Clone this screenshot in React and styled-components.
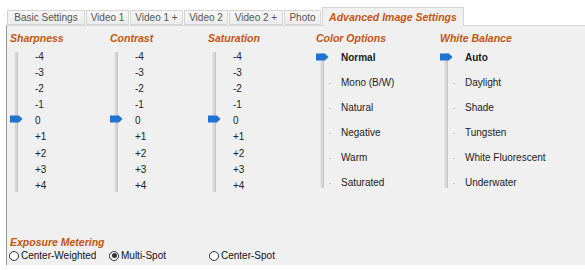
import React from 'react';
import styled, { createGlobalStyle } from 'styled-components';

const GlobalStyle = createGlobalStyle`
	html, body {
		margin: 0;
		padding: 0;
		background: #ffffff;
	}
	body {
		font-family: "Liberation Sans", Arial, sans-serif;
		font-size: 10px;
		color: #222;
	}
`;

const Window = styled.div`
	width: 585px;
	height: 270px;
	padding: 6px 0 0 6px;
	box-sizing: border-box;
	display: flex;
	flex-direction: column;
	overflow: hidden;
`;

const TabStrip = styled.div`
	display: flex;
	align-items: flex-end;
	height: 19px;
	padding-left: 1px;
`;

const Tab = styled.div`
	width: ${(p) => p.$width}px;
	height: ${(p) => (p.$active ? '19px' : '15px')};
	margin-right: 1px;
	box-sizing: border-box;
	display: flex;
	align-items: center;
	justify-content: center;
	border: 1px solid #d4d4d4;
	border-bottom: ${(p) => (p.$active ? 'none' : '1px solid #d4d4d4')};
	background: ${(p) => (p.$active ? '#f0f0f0' : 'linear-gradient(#f7f7f7, #ececec)')};
	color: ${(p) => (p.$active ? '#c4550f' : '#555')};
	font-weight: ${(p) => (p.$active ? 'bold' : 'normal')};
	font-style: ${(p) => (p.$active ? 'italic' : 'normal')};
	font-size: ${(p) => (p.$active ? '10.5px' : '10px')};
	white-space: nowrap;
	position: relative;
	top: ${(p) => (p.$active ? '1px' : '0')};
`;

const Panel = styled.div`
	flex: 1;
	margin-bottom: 5px;
	background: #f0f0f0;
	border-top: 1px solid #d8d8d8;
	border-left: 1px solid #9a9a9a;
	display: flex;
	flex-direction: column;
	padding: 6px 0 3px 3px;
`;

const Groups = styled.div`
	display: flex;
`;

const Group = styled.div`
	width: ${(p) => p.$width}px;
	flex-shrink: 0;
	display: flex;
	flex-direction: column;
`;

const Heading = styled.div`
	color: #c4550f;
	font-weight: bold;
	font-style: italic;
	font-size: 10.5px;
	line-height: 13px;
	margin-bottom: ${(p) => (p.$tight ? '0' : '4px')};
`;

const SliderBody = styled.div`
	display: flex;
	position: relative;
	margin-top: ${(p) => p.$shift || 0}px;
`;

const Track = styled.div`
	position: relative;
	width: 25px;
	flex-shrink: 0;

	&::before {
		content: '';
		position: absolute;
		left: 4px;
		top: ${(p) => p.$top}px;
		bottom: ${(p) => p.$bottom}px;
		width: 2px;
		background: #d6d6d6;
		border-left: 1px solid #e8e8e8;
		border-right: 1px solid #c4c4c4;
	}
`;

const Thumb = styled.svg`
	position: absolute;
	left: 0;
	top: ${(p) => p.$top}px;
`;

const Labels = styled.div`
	display: flex;
	flex-direction: column;
`;

const Label = styled.div`
	height: ${(p) => p.$step}px;
	line-height: ${(p) => p.$step}px;
	font-size: 10px;
	color: ${(p) => (p.$dark ? '#1a1f3d' : '#222')};
	font-weight: ${(p) => (p.$bold ? 'bold' : 'normal')};
	white-space: nowrap;
	position: relative;
`;

const Tick = styled.span`
	position: absolute;
	left: -12px;
	top: 50%;
	width: 2px;
	height: 1px;
	background: #c8c8c8;
`;

const Metering = styled.div`
	margin-top: auto;
	display: flex;
	flex-direction: column;
`;

const RadioRow = styled.div`
	display: flex;
	margin-left: -1px;
`;

const RadioItem = styled.label`
	width: 100px;
	display: flex;
	align-items: center;
	gap: 2px;
	font-size: 10px;
	line-height: 13px;
	color: #111;
`;

const RadioCircle = styled.span`
	width: 10px;
	height: 10px;
	box-sizing: border-box;
	border-radius: 50%;
	border: 1px solid #333;
	background: #fff;
	display: flex;
	align-items: center;
	justify-content: center;

	&::after {
		content: '';
		width: 5px;
		height: 5px;
		border-radius: 50%;
		background: ${(p) => (p.$checked ? '#333' : 'transparent')};
	}
`;

const ThumbIcon = ({ top }) => (
	<Thumb $top={top} width="13" height="8" viewBox="0 0 13 8">
		<path d="M0 0.5 H9 L12.5 4 L9 7.5 H0 Z" fill="#1f74d3" />
	</Thumb>
);

const NumberSlider = ({ title, width }) => {
	const values = ['-4', '-3', '-2', '-1', '0', '+1', '+2', '+3', '+4'];
	return (
		<Group $width={width}>
			<Heading>{title}</Heading>
			<SliderBody>
				<Track $top={3} $bottom={2}>
					<ThumbIcon top={66} />
				</Track>
				<Labels>
					{values.map((v) => (
						<Label key={v} $step={16.1} $dark={v === '-4' || v === '-1'}>
							{v}
						</Label>
					))}
				</Labels>
			</SliderBody>
		</Group>
	);
};

const ListSlider = ({ title, width, items }) => (
	<Group $width={width}>
		<Heading>{title}</Heading>
		<SliderBody $shift={-4}>
			<Track $top={8} $bottom={7}>
				<ThumbIcon top={8} />
			</Track>
			<Labels>
				{items.map((item, i) => (
					<Label key={item} $step={25} $bold={i === 0}>
						{i > 0 && <Tick />}
						{item}
					</Label>
				))}
			</Labels>
		</SliderBody>
	</Group>
);

const tabs = [
	{ title: 'Basic Settings', width: 78 },
	{ title: 'Video 1', width: 43 },
	{ title: 'Video 1 +', width: 53 },
	{ title: 'Video 2', width: 44 },
	{ title: 'Video 2 +', width: 54 },
	{ title: 'Photo', width: 37 },
];

const App = () => {
	return (
		<>
			<GlobalStyle />
			<Window>
				<TabStrip>
					{tabs.map((t) => (
						<Tab key={t.title} $width={t.width}>
							{t.title}
						</Tab>
					))}
					<Tab $active $width={142}>
						Advanced Image Settings
					</Tab>
				</TabStrip>
				<Panel>
					<Groups>
						<NumberSlider title="Sharpness" width={100} />
						<NumberSlider title="Contrast" width={98} />
						<NumberSlider title="Saturation" width={108} />
						<ListSlider
							title="Color Options"
							width={124}
							items={['Normal', 'Mono (B/W)', 'Natural', 'Negative', 'Warm', 'Saturated']}
						/>
						<ListSlider
							title="White Balance"
							width={140}
							items={['Auto', 'Daylight', 'Shade', 'Tungsten', 'White Fluorescent', 'Underwater']}
						/>
					</Groups>
					<Metering>
						<Heading $tight>Exposure Metering</Heading>
						<RadioRow>
							<RadioItem>
								<RadioCircle />
								Center-Weighted
							</RadioItem>
							<RadioItem>
								<RadioCircle $checked />
								Multi-Spot
							</RadioItem>
							<RadioItem>
								<RadioCircle />
								Center-Spot
							</RadioItem>
						</RadioRow>
					</Metering>
				</Panel>
			</Window>
		</>
	);
};

export default App;
